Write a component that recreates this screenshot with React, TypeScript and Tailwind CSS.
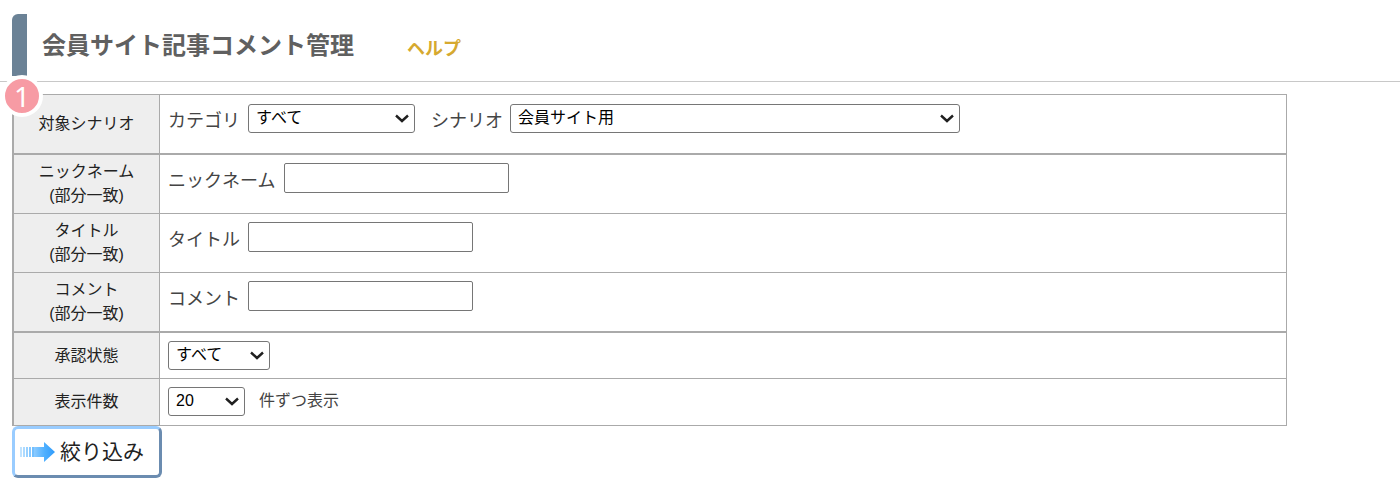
import React from "react";

const font = "font-['Liberation_Sans','Noto_Sans_CJK_JP',sans-serif]";

function Head({ children }: { children: React.ReactNode }) {
  return (
    <div className="w-[146px] shrink-0 bg-[#eeeeee] border-r border-[#aaaaaa] flex items-center justify-center text-center text-[16px] leading-[24px] text-[#222222]">
      <div>{children}</div>
    </div>
  );
}

function Row({ h, thick, pt, head, children }: { h: string; thick?: boolean; pt?: string; head: React.ReactNode; children: React.ReactNode }) {
  return (
    <div className={`flex ${h} ${thick ? "border-b-2" : "border-b"} border-[#aaaaaa]`}>
      <Head>{head}</Head>
      <div className={`flex-1 pl-2 ${pt ?? "pt-[8px]"} flex items-start text-[#444444]`}>{children}</div>
    </div>
  );
}

function Sel({ w, value }: { w: string; value: string }) {
  return (
    <select
      defaultValue={value}
      className={`${w} h-[29px] appearance-none bg-white border border-[#767676] rounded-[3px] pl-[7px] pb-[2px] text-[16px] leading-[20px] text-black outline-none`}
      style={{
        backgroundImage:
          "url(\"data:image/svg+xml,%3Csvg xmlns='http://www.w3.org/2000/svg' width='14' height='9' viewBox='0 0 14 9'%3E%3Cpath d='M1 1.5 7 7l6-5.5' fill='none' stroke='%23202020' stroke-width='2.4'/%3E%3C/svg%3E\")",
        backgroundRepeat: "no-repeat",
        backgroundPosition: "right 5px center",
      }}
    >
      <option>{value}</option>
    </select>
  );
}

function Field({ label, mr }: { label: string; mr: string }) {
  return (
    <div className="flex items-start">
      <span className={`text-[18px] leading-[29px] mt-[4px] ${mr}`}>{label}</span>
      <input className="w-[225px] h-[30px] bg-white border border-[#767676] rounded-[2px] outline-none" />
    </div>
  );
}

function Arrow() {
  return (
    <svg width="37" height="22" viewBox="0 0 37 22" className="shrink-0">
      <defs>
        <linearGradient id="ag" x1="0" x2="1" y1="0" y2="0">
          <stop offset="0" stopColor="#8ccbff" />
          <stop offset="0.5" stopColor="#4fb0ff" />
          <stop offset="1" stopColor="#2f9bfb" />
        </linearGradient>
      </defs>
      <path d="M25 6V1l11 10-11 10v-5H15V6z" fill="url(#ag)" />
      {[1, 4, 7, 10, 13].map((x) => (
        <rect key={x} x={x} y="6" width="2" height="10" fill="#5db6ff" opacity={0.35 + x * 0.04} />
      ))}
    </svg>
  );
}

export default function App() {
  return (
    <div className={`relative w-[1400px] h-[492px] bg-white overflow-hidden ${font}`}>
      <header className="h-[82px] border-b border-[#c8c8c8] pt-[14px] pl-[12px] flex items-start">
        <div className="w-[15px] h-[62px] bg-[#6b8296] rounded-tl-[6px]" />
        <h1 className="ml-[15px] mt-[14px] text-[24px] leading-[36px] font-bold text-[#606060]">会員サイト記事コメント管理</h1>
        <a className="ml-[53px] mt-[21px] text-[18px] leading-[28px] font-bold text-[#d6a92f]">ヘルプ</a>
      </header>

      <div className="absolute left-[1px] top-[75px] w-[42px] h-[42px] rounded-full bg-[#f79ba4] border-[4px] border-white flex items-center justify-center text-white text-[28px] leading-none font-['Noto_Sans']">
        1
      </div>

      <main className="ml-[12px] mt-[12px] w-[1275px]">
        <div className="border-t border-r border-[#aaaaaa] border-l-2 border-l-[#aaaaaa]">
          <Row h="h-[60px]" thick pt="pt-[9px]" head="対象シナリオ">
            <div className="flex items-start">
              <span className="text-[18px] leading-[29px] mt-[3px] mr-2">カテゴリ</span>
              <Sel w="w-[167px]" value="すべて" />
              <span className="text-[18px] leading-[29px] mt-[3px] ml-4 mr-[7px]">シナリオ</span>
              <Sel w="w-[450px]" value="会員サイト用" />
            </div>
          </Row>
          <Row h="h-[59px]" head={<>ニックネーム<br />(部分一致)</>}>
            <Field label="ニックネーム" mr="mr-[9px]" />
          </Row>
          <Row h="h-[59px]" head={<>タイトル<br />(部分一致)</>}>
            <Field label="タイトル" mr="mr-2" />
          </Row>
          <Row h="h-[60px]" thick head={<>コメント<br />(部分一致)</>}>
            <Field label="コメント" mr="mr-2" />
          </Row>
          <Row h="h-[46px]" head="承認状態">
            <Sel w="w-[102px]" value="すべて" />
          </Row>
          <Row h="h-[47px]" head="表示件数">
            <div className="flex items-center">
              <Sel w="w-[77px]" value="20" />
              <span className="ml-[14px] -mt-[1px] text-[16px] text-[#444444]">件ずつ表示</span>
            </div>
          </Row>
        </div>
        <button className="mt-0 w-[150px] h-[52px] bg-white rounded-[6px] border-[3px] border-t-[#99ccff] border-l-[#99ccff] border-r-[#6b8cb0] border-b-[#6b8cb0] flex items-center pl-[4px] text-[21px] text-[#222222]">
          <Arrow />
          <span className="ml-[4px]">絞り込み</span>
        </button>
      </main>
    </div>
  );
}
